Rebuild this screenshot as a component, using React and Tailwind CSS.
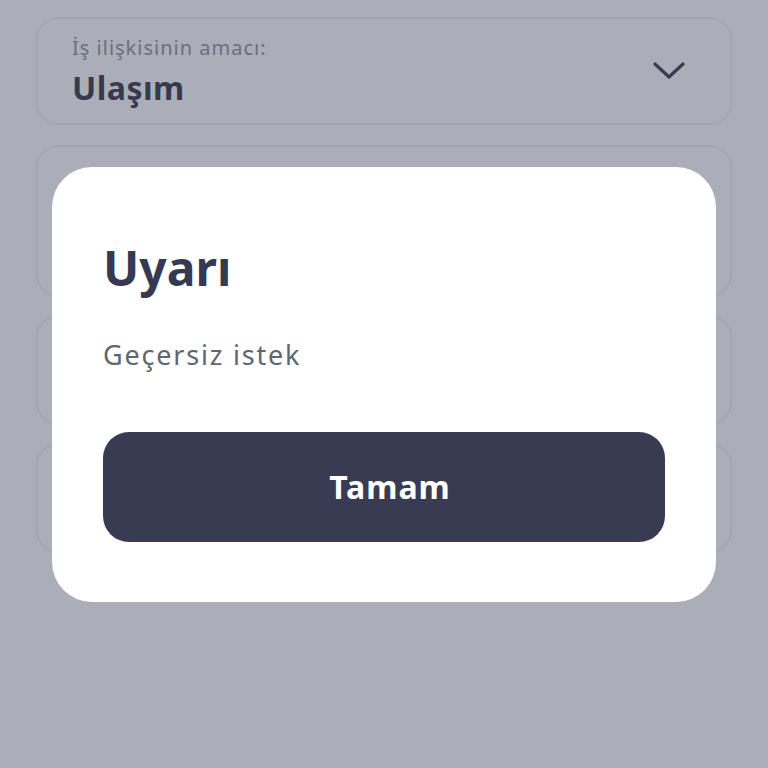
import React from "react";

function Chevron() {
  return (
    <svg width="34" height="20" viewBox="0 0 34 20" fill="none">
      <path
        d="M3 3 L17 16 L31 3"
        stroke="#383b51"
        strokeWidth="3.2"
        strokeLinecap="round"
        strokeLinejoin="round"
      />
    </svg>
  );
}

function Field({ h }) {
  return <div className={`rounded-[22px] border-2 border-[#a3a6b1] ${h}`} />;
}

export default function App() {
  return (
    <div
      className="relative h-[768px] w-[768px] overflow-hidden bg-[#abaeb8]"
      style={{ fontFamily: '"Noto Sans", "Liberation Sans", sans-serif' }}
    >
      {/* form behind the dialog */}
      <div className="flex flex-col gap-[18px] px-[36px] pt-[17px]">
        <div className="flex h-[108px] items-center justify-between rounded-[22px] border-2 border-[#a3a6b1] pl-[34px] pr-[44px]">
          <div className="flex flex-col gap-[14px]">
            <span className="text-[20px] leading-none tracking-[1px] text-[#6b6e7b]">
              İş ilişkisinin amacı:
            </span>
            <span className="text-[32px] font-bold leading-none tracking-[0.5px] text-[#373a4f]">
              Ulaşım
            </span>
          </div>
          <Chevron />
        </div>
        <div className="mt-[2px]">
          <Field h="h-[152px]" />
        </div>
        <Field h="h-[110px]" />
        <Field h="h-[110px]" />
      </div>

      {/* alert dialog */}
      <div className="absolute inset-0 flex justify-center pt-[167px]">
        <div className="flex h-[435px] w-[664px] flex-col rounded-[40px] bg-white px-[51px] pt-[77px]">
          <h2 className="text-[48px] font-bold leading-none text-[#363a50]">
            Uyarı
          </h2>
          <p className="mt-[49px] text-[27px] leading-none tracking-[1.8px] text-[#62656f]">
            Geçersiz istek
          </p>
          <button className="mt-[64px] flex h-[110px] w-full items-center justify-center rounded-[26px] bg-[#383b51] pl-[12px] text-[32px] font-bold tracking-[1px] text-white">
            Tamam
          </button>
        </div>
      </div>
    </div>
  );
}
